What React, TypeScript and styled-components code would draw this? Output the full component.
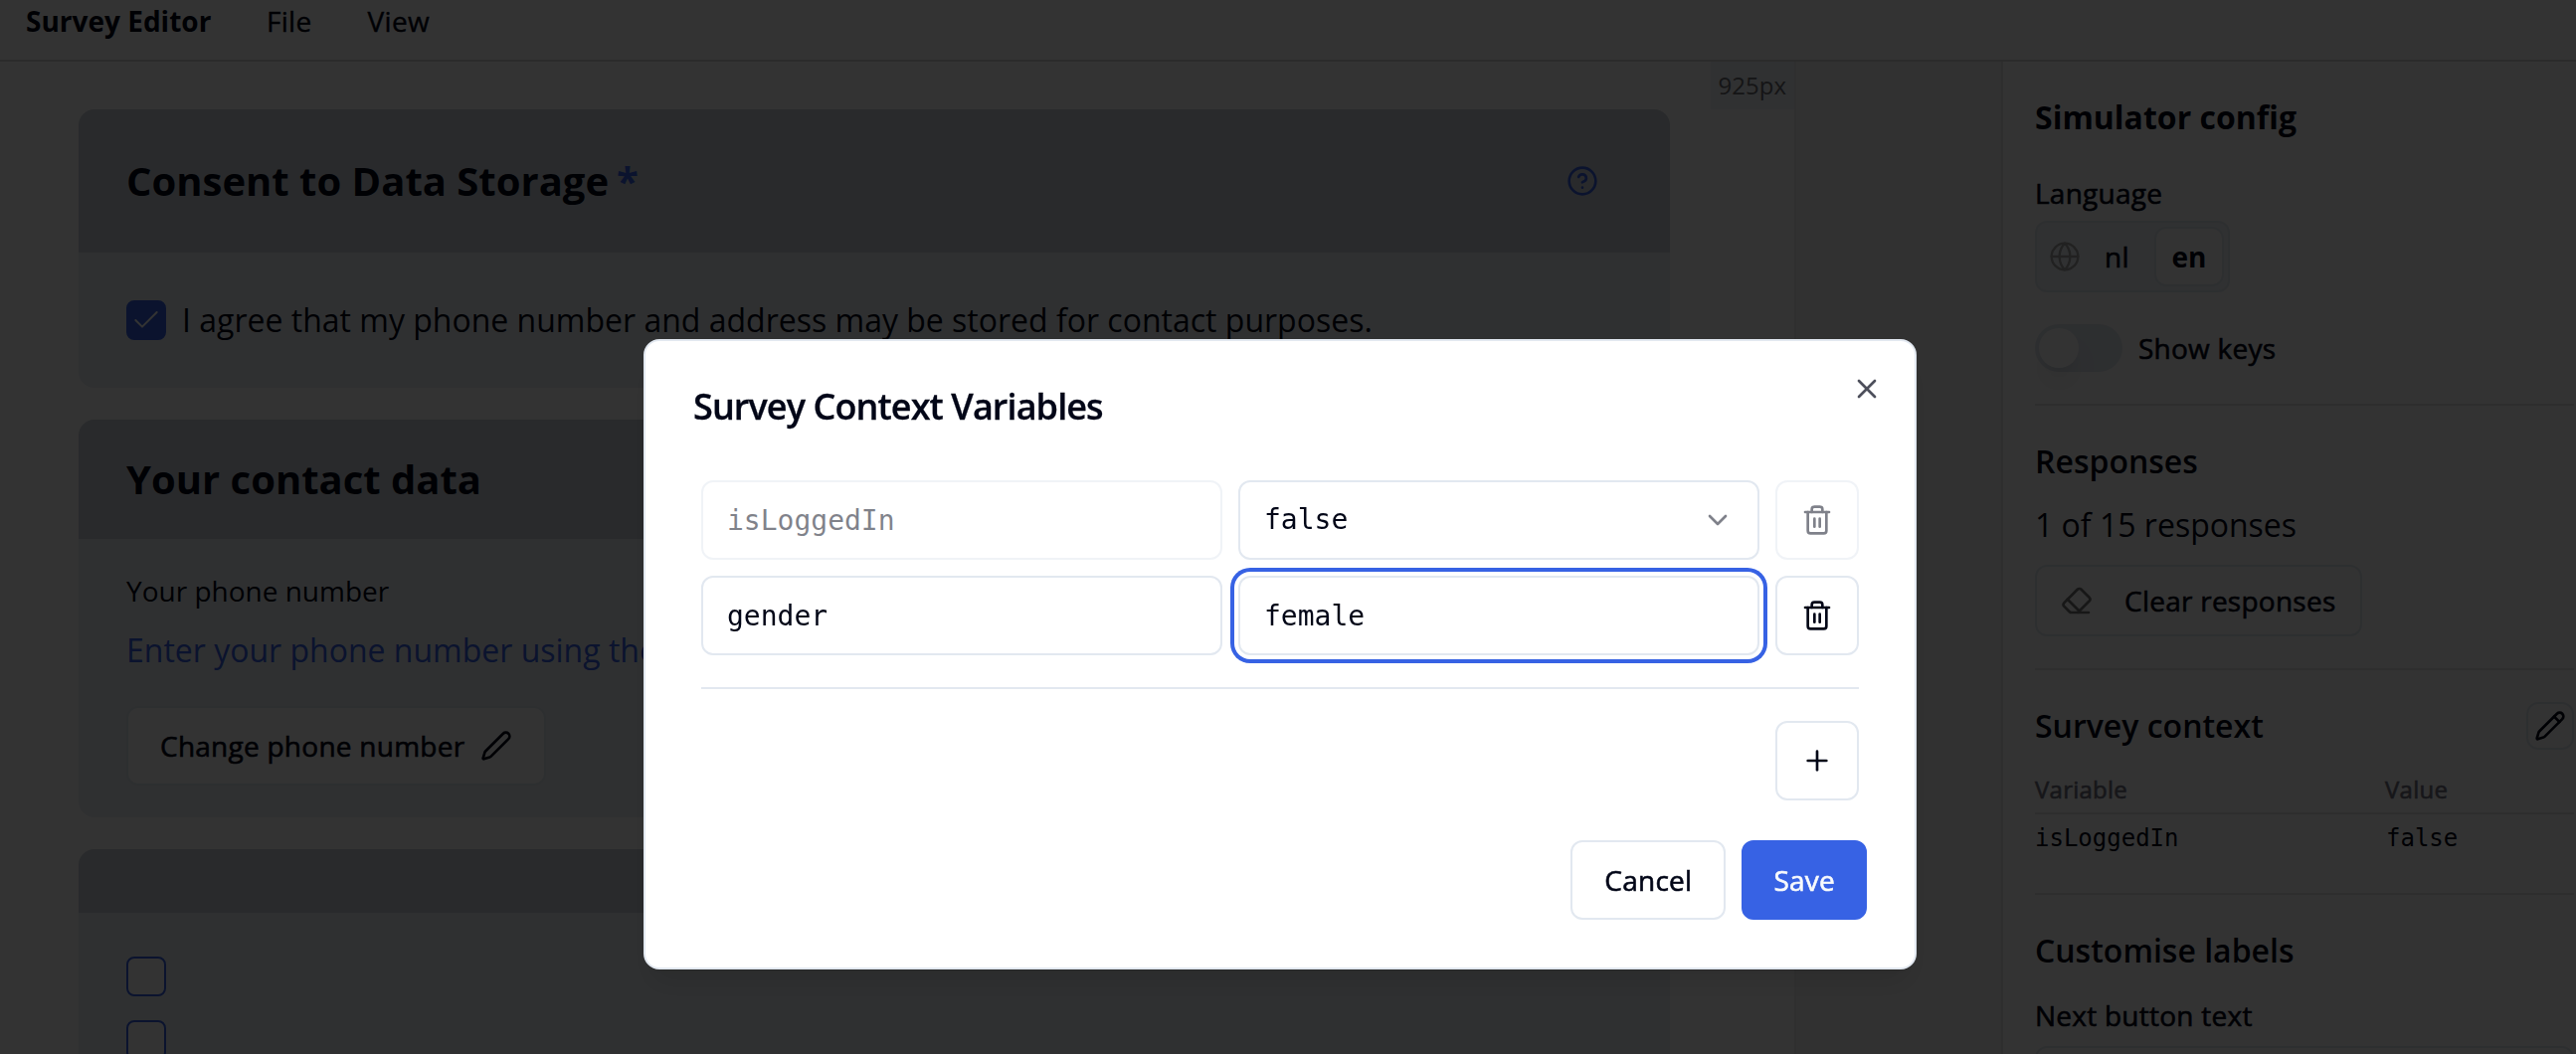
import React from "react";
import styled, { createGlobalStyle, css } from "styled-components";
import {
  Check,
  ChevronDown,
  CircleHelp,
  Eraser,
  Globe,
  Pen,
  Pencil,
  Plus,
  Trash2,
  X,
} from "lucide-react";

const color = {
  ink: "#020617",
  primary: "#3762e4",
  border: "#e2e8f0",
  line: "#e5e5e7",
  muted: "#71717f",
  cardHead: "#cdd2d9",
  cardBody: "#ebf0f5",
};

const sans = '"Open Sans", "Noto Sans", sans-serif';
const mono = '"DejaVu Sans Mono", monospace';

// Open Sans ships without a medium cut here, so thicken the regular one.
const medium = css`
  font-weight: 400;
  letter-spacing: 0.25px;
  -webkit-text-stroke: 0.6px currentColor;
`;

const GlobalStyle = createGlobalStyle`
  *, *::before, *::after { box-sizing: border-box; }
  body { margin: 0; background: #fff; }
  button, input { font: inherit; color: inherit; margin: 0; }
  svg { display: block; flex: none; }
`;

const Page = styled.div`
  display: flex;
  flex-direction: column;
  width: 2590px;
  height: 1060px;
  overflow: hidden;
  color: ${color.ink};
  font-family: ${sans};
  font-size: 28px;
  line-height: 40px;
`;

const MenuBar = styled.header`
  display: flex;
  flex: none;
  height: 62px;
  padding: 1px 0 0 26px;
  border-bottom: 2px solid #d6d6d6;
`;

const Brand = styled.div`
  width: 242px;
  font-weight: 700;
`;

const MenuItem = styled.div`
  margin-right: 56px;
  letter-spacing: 0.3px;
  -webkit-text-stroke: 0.4px currentColor;
`;

const Workspace = styled.div`
  display: flex;
  flex: 1;
  min-height: 0;
`;

const Preview = styled.main`
  position: relative;
  display: flex;
  flex-direction: column;
  gap: 32px;
  width: 1806px;
  padding: 48px 125px 0 79px;
  border-right: 2px solid #ececec;
`;

const WidthBadge = styled.div`
  position: absolute;
  top: 0;
  right: 0;
  padding: 0 8px;
  background: #f1f5f9;
  color: #6b6b70;
  font-size: 24px;
  line-height: 48px;
`;

const Gutter = styled.div`
  width: 206px;
  background: #f3f3f3;
`;

const Card = styled.section`
  flex: none;
  overflow: hidden;
  border-radius: 16px;
  background: ${color.cardBody};
`;

const CardHead = styled.div<{ $height: number }>`
  display: flex;
  align-items: center;
  justify-content: space-between;
  height: ${(p) => p.$height}px;
  padding: 0 72px 0 48px;
  background: ${color.cardHead};
  svg {
    color: ${color.primary};
  }
`;

const CardTitle = styled.h2`
  display: flex;
  gap: 8px;
  margin: 0;
  font-size: 40px;
  font-weight: 700;
  line-height: 48px;
`;

const Required = styled.span`
  color: ${color.primary};
`;

const CardBody = styled.div<{ $pad: number; $gap: number }>`
  display: flex;
  flex-direction: column;
  align-items: flex-start;
  gap: ${(p) => p.$gap}px;
  padding: ${(p) => p.$pad}px 48px;
`;

const CheckRow = styled.label`
  display: flex;
  align-items: center;
  gap: 16px;
  font-size: 32px;
`;

const CheckBox = styled.span<{ $checked?: boolean }>`
  display: flex;
  align-items: center;
  justify-content: center;
  width: 40px;
  height: 40px;
  border: 2px solid ${color.primary};
  border-radius: 8px;
  background: ${(p) => (p.$checked ? color.primary : "#fff")};
  color: #fff;
`;

const Hint = styled.p`
  margin: 0 0 16px;
  color: ${color.primary};
  font-size: 32px;
  line-height: 48px;
  white-space: nowrap;
`;

const Button = styled.button<{ $height?: number; $primary?: boolean }>`
  display: flex;
  align-items: center;
  height: ${(p) => p.$height ?? 80}px;
  padding: 0 ${(p) => (p.$primary ? 30 : 32)}px;
  border: 2px solid ${(p) => (p.$primary ? color.primary : color.border)};
  border-radius: 12px;
  background: ${(p) => (p.$primary ? color.primary : "#fff")};
  color: ${(p) => (p.$primary ? "#f8fafc" : "inherit")};
  ${medium}
`;

const ChangeButton = styled(Button)`
  gap: 16px;
`;

const ClearButton = styled(Button)`
  gap: 32px;
  padding: 0 24px;
  svg {
    color: #737373;
  }
`;

const Sidebar = styled.aside`
  flex: 1;
  padding: 32px 2px 0 32px;
  border-left: 2px solid ${color.line};
`;

const Section = styled.section`
  display: flex;
  flex-direction: column;
  align-items: flex-start;
  padding-bottom: 32px;
  margin-bottom: 32px;
  border-bottom: 2px solid ${color.line};
`;

const SectionHead = styled.div`
  display: flex;
  align-items: center;
  justify-content: space-between;
  align-self: stretch;
  height: 48px;
`;

const SectionTitle = styled.h3<{ $weight?: number }>`
  margin: 0;
  font-size: 32px;
  font-weight: ${(p) => p.$weight ?? 600};
  line-height: 48px;
`;

const Label = styled.div<{ $top?: number }>`
  margin-top: ${(p) => p.$top ?? 0}px;
  ${medium}
`;

const LanguagePicker = styled.div`
  display: flex;
  align-items: center;
  width: 196px;
  height: 72px;
  margin: 8px 0 32px;
  padding: 4px 4px 4px 12px;
  border: 2px solid ${color.border};
  border-radius: 12px;
  background: #f1f5f9;
  svg {
    color: #a3a3a3;
  }
`;

const Language = styled.span<{ $active?: boolean }>`
  flex: ${(p) => (p.$active ? "none" : "1")};
  width: ${(p) => (p.$active ? "70px" : "auto")};
  padding-left: ${(p) => (p.$active ? 0 : 22)}px;
  border: 2px solid ${(p) => (p.$active ? color.border : "transparent")};
  border-radius: 12px;
  background: ${(p) => (p.$active ? "#fff" : "transparent")};
  line-height: 56px;
  text-align: ${(p) => (p.$active ? "center" : "left")};
  ${(p) => (p.$active ? "font-weight: 700;" : medium)}
`;

const SwitchRow = styled.div`
  display: flex;
  align-items: center;
  gap: 16px;
  ${medium}
`;

const Switch = styled.span`
  width: 88px;
  height: 48px;
  padding: 4px;
  border-radius: 24px;
  background: ${color.border};
`;

const Thumb = styled.span`
  display: block;
  width: 40px;
  height: 40px;
  border-radius: 50%;
  background: #fff;
  box-shadow: 0 20px 30px -6px rgb(0 0 0 / 0.1), 0 8px 12px -8px rgb(0 0 0 / 0.1);
`;

const ResponseCount = styled.p`
  margin: 16px 0;
  font-size: 32px;
  line-height: 48px;
`;

const EditButton = styled.button`
  display: flex;
  align-items: center;
  justify-content: center;
  width: 48px;
  height: 48px;
  padding: 0;
  border: 2px solid ${color.border};
  border-radius: 12px;
  background: #fff;
`;

const ContextTable = styled.div`
  align-self: stretch;
  margin: 24px 0 7px;
  font-size: 24px;
  line-height: 32px;
`;

const TableHead = styled.div`
  display: grid;
  grid-template-columns: 352px 1fr;
  height: 41px;
  border-bottom: 2px solid ${color.line};
  color: ${color.muted};
  ${medium}
`;

const TableRow = styled.div`
  display: grid;
  grid-template-columns: 353px 1fr;
  height: 40px;
  padding-top: 8px;
  font-family: ${mono};
`;

const LabelInput = styled.div`
  height: 80px;
  margin-top: 11px;
  border: 2px solid ${color.border};
  border-radius: 12px;
`;

const Overlay = styled.div`
  position: fixed;
  inset: 0;
  display: flex;
  align-items: flex-start;
  padding: 341px 0 0 647px;
  background: rgb(0 0 0 / 0.8);
  color: ${color.ink};
  font-family: ${sans};
  font-size: 28px;
`;

const Dialog = styled.div`
  position: relative;
  width: 1280px;
  height: 634px;
  padding: 48px;
  border: 2px solid ${color.border};
  border-radius: 16px;
  background: #fff;
  box-shadow: 0 20px 30px -6px rgb(0 0 0 / 0.1), 0 8px 12px -8px rgb(0 0 0 / 0.1);
`;

const DialogTitle = styled.h1`
  margin: 0 0 56px;
  font-size: 36px;
  font-weight: 600;
  line-height: 36px;
  letter-spacing: -0.025em;
  -webkit-text-stroke: 0.3px currentColor;
`;

const CloseButton = styled.button`
  position: absolute;
  top: 32px;
  right: 32px;
  padding: 0;
  border: 0;
  background: none;
  opacity: 0.7;
`;

const Variables = styled.div`
  display: flex;
  flex-direction: column;
  gap: 16px;
  margin: 0 8px;
`;

const VariableRow = styled.div`
  display: grid;
  grid-template-columns: 1fr 1fr 84px;
  gap: 16px;
`;

const Field = styled.input<{ $focused?: boolean }>`
  width: 100%;
  height: 80px;
  padding: 0 24px;
  border: 2px solid ${color.border};
  border-radius: 12px;
  outline: none;
  background: #fff;
  box-shadow: ${(p) => (p.$focused ? `0 0 0 4px #fff, 0 0 0 8px ${color.primary}` : "none")};
  font-family: ${mono};
  &:disabled {
    opacity: 0.5;
  }
`;

const Select = styled.button`
  display: flex;
  align-items: center;
  justify-content: space-between;
  height: 80px;
  padding: 0 24px 2px;
  border: 2px solid ${color.border};
  border-radius: 12px;
  background: #fff;
  font-family: ${mono};
  svg {
    position: relative;
    top: 1px;
    opacity: 0.5;
  }
`;

const IconButton = styled.button`
  display: flex;
  align-items: center;
  justify-content: center;
  width: 84px;
  height: 80px;
  padding: 0;
  border: 2px solid ${color.border};
  border-radius: 12px;
  background: #fff;
  &:disabled {
    opacity: 0.5;
  }
`;

const AddRow = styled.div`
  display: flex;
  justify-content: flex-end;
  margin: 32px 8px 40px;
  padding-top: 32px;
  border-top: 2px solid ${color.border};
`;

const Actions = styled.div`
  display: flex;
  justify-content: flex-end;
  gap: 16px;
`;

export default function App() {
  return (
    <>
      <GlobalStyle />
      <Page>
        <MenuBar>
          <Brand>Survey Editor</Brand>
          <MenuItem>File</MenuItem>
          <MenuItem>View</MenuItem>
        </MenuBar>
        <Workspace>
          <Preview>
            <WidthBadge>925px</WidthBadge>
            <Card>
              <CardHead $height={144}>
                <CardTitle>
                  Consent to Data Storage <Required>*</Required>
                </CardTitle>
                <CircleHelp size={32} />
              </CardHead>
              <CardBody $pad={48} $gap={0}>
                <CheckRow>
                  <CheckBox $checked>
                    <Check size={32} strokeWidth={1.5} />
                  </CheckBox>
                  I agree that my phone number and address may be stored for contact purposes.
                </CheckRow>
              </CardBody>
            </Card>
            <Card>
              <CardHead $height={120}>
                <CardTitle>Your contact data</CardTitle>
              </CardHead>
              <CardBody $pad={32} $gap={16}>
                <div>Your phone number</div>
                <Hint>Enter your phone number using the</Hint>
                <ChangeButton>
                  Change phone number
                  <Pen size={32} />
                </ChangeButton>
              </CardBody>
            </Card>
            <Card>
              <CardHead $height={64} />
              <CardBody $pad={44} $gap={24}>
                <CheckBox />
                <CheckBox />
              </CardBody>
            </Card>
          </Preview>
          <Gutter />
          <Sidebar>
            <Section>
              <SectionTitle $weight={700}>Simulator config</SectionTitle>
              <Label $top={32}>Language</Label>
              <LanguagePicker>
                <Globe size={32} strokeWidth={1.75} />
                <Language>nl</Language>
                <Language $active>en</Language>
              </LanguagePicker>
              <SwitchRow>
                <Switch>
                  <Thumb />
                </Switch>
                Show keys
              </SwitchRow>
            </Section>
            <Section>
              <SectionTitle>Responses</SectionTitle>
              <ResponseCount>1 of 15 responses</ResponseCount>
              <ClearButton $height={72}>
                <Eraser size={32} />
                Clear responses
              </ClearButton>
            </Section>
            <Section>
              <SectionHead>
                <SectionTitle>Survey context</SectionTitle>
                <EditButton>
                  <Pencil size={32} />
                </EditButton>
              </SectionHead>
              <ContextTable>
                <TableHead>
                  <span>Variable</span>
                  <span>Value</span>
                </TableHead>
                <TableRow>
                  <span>isLoggedIn</span>
                  <span>false</span>
                </TableRow>
              </ContextTable>
            </Section>
            <SectionTitle>Customise labels</SectionTitle>
            <Label $top={21}>Next button text</Label>
            <LabelInput />
          </Sidebar>
        </Workspace>
      </Page>
      <Overlay>
        <Dialog>
          <DialogTitle>Survey Context Variables</DialogTitle>
          <CloseButton>
            <X size={32} />
          </CloseButton>
          <Variables>
            <VariableRow>
              <Field defaultValue="isLoggedIn" disabled />
              <Select>
                false
                <ChevronDown size={32} />
              </Select>
              <IconButton disabled>
                <Trash2 size={32} />
              </IconButton>
            </VariableRow>
            <VariableRow>
              <Field defaultValue="gender" />
              <Field defaultValue="female" $focused />
              <IconButton>
                <Trash2 size={32} />
              </IconButton>
            </VariableRow>
          </Variables>
          <AddRow>
            <IconButton>
              <Plus size={32} />
            </IconButton>
          </AddRow>
          <Actions>
            <Button>Cancel</Button>
            <Button $primary>Save</Button>
          </Actions>
        </Dialog>
      </Overlay>
    </>
  );
}
